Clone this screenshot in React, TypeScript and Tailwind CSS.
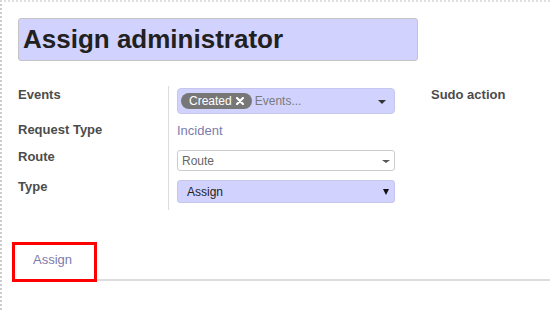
import React from "react";

function Caret({ className }: { className: string }) {
  return <span className={className} />;
}

export default function App() {
  return (
    <div className="w-[550px] h-[310px] overflow-hidden bg-white border-t-2 border-t-[#e0e0e0] border-l-2 border-dotted border-l-[#cccccc] font-['Liberation_Sans',Arial,sans-serif] text-[#4c4c4c]">
      {/* Title */}
      <div className="pt-[16px] pl-[16px]">
        <div className="w-[400px] h-[43px] bg-[#d2d2ff] border border-[#c4c4c4] rounded-[3px] pl-[4px] text-[26px] leading-[41px] font-bold text-[#212121] whitespace-nowrap">
          Assign administrator
        </div>
      </div>

      {/* Form */}
      <div className="flex mt-[25px] pl-[16px]">
        <div className="w-[150px] flex flex-col text-[13px] font-bold leading-[16px]">
          <div className="mt-[1px] h-[16px]">Events</div>
          <div className="mt-[19px] h-[16px]">Request Type</div>
          <div className="mt-[11px] h-[16px]">Route</div>
          <div className="mt-[14px] h-[16px]">Type</div>
        </div>

        <div className="w-[227px] border-l border-[#dddddd] pl-[8px] pb-[7px] flex flex-col">
          {/* Events many2many tags */}
          <div className="mt-[2px] h-[26px] w-[218px] bg-[#d2d2ff] border border-[#c6c6ef] rounded-[4px] flex items-center pl-[3px] pr-[8px]">
            <span className="h-[16px] rounded-full bg-[#777777] text-white text-[12px] leading-[16px] flex items-center pl-[8px] pr-[8px]">
              Created
              <svg width="8" height="8" viewBox="0 0 8 8" className="ml-[4px]">
                <path d="M1 1 L7 7 M7 1 L1 7" stroke="white" strokeWidth="2.2" strokeLinecap="round" />
              </svg>
            </span>
            <span className="ml-[3px] text-[12px] text-[#7a7a7a] flex-1">Events...</span>
            <Caret className="w-0 h-0 border-l-[4px] border-r-[4px] border-t-[4px] border-l-transparent border-r-transparent border-t-[#333333] mt-[2px]" />
          </div>

          {/* Request type */}
          <div className="mt-[9px] h-[16px] text-[13px] leading-[16px] text-[#7c7bad]">Incident</div>

          {/* Route */}
          <div className="mt-[11px] h-[21px] w-[218px] bg-white border border-[#cccccc] rounded-[3px] flex items-center pl-[4px] pr-[4px]">
            <span className="flex-1 text-[12px] text-[#666666]">Route</span>
            <Caret className="w-0 h-0 border-l-[4px] border-r-[4px] border-t-[3px] border-l-transparent border-r-transparent border-t-[#555555] mt-[1px]" />
          </div>

          {/* Type */}
          <div className="mt-[9px] h-[23px] w-[218px] bg-[#d2d2ff] border border-[#c6c6ef] rounded-[3px] flex items-center pl-[9px] pr-[5px]">
            <span className="flex-1 text-[12px] text-[#222222]">Assign</span>
            <Caret className="w-0 h-0 border-l-[3.5px] border-r-[3.5px] border-t-[6px] border-l-transparent border-r-transparent border-t-[#111111]" />
          </div>
        </div>

        <div className="ml-[36px] mt-[1px] text-[13px] font-bold leading-[16px]">Sudo action</div>
      </div>

      {/* Tabs */}
      <div className="flex items-end mt-[32px] pl-[10px]">
        <div className="w-[85px] h-[40px] border-[3px] border-[#ff0000] pl-[18px] pt-[7px] text-[13px] leading-[16px] text-[#7c7bad]">
          Assign
        </div>
        <div className="flex-1 h-[2px] bg-[#dddddd] mb-[1px]" />
      </div>
    </div>
  );
}
